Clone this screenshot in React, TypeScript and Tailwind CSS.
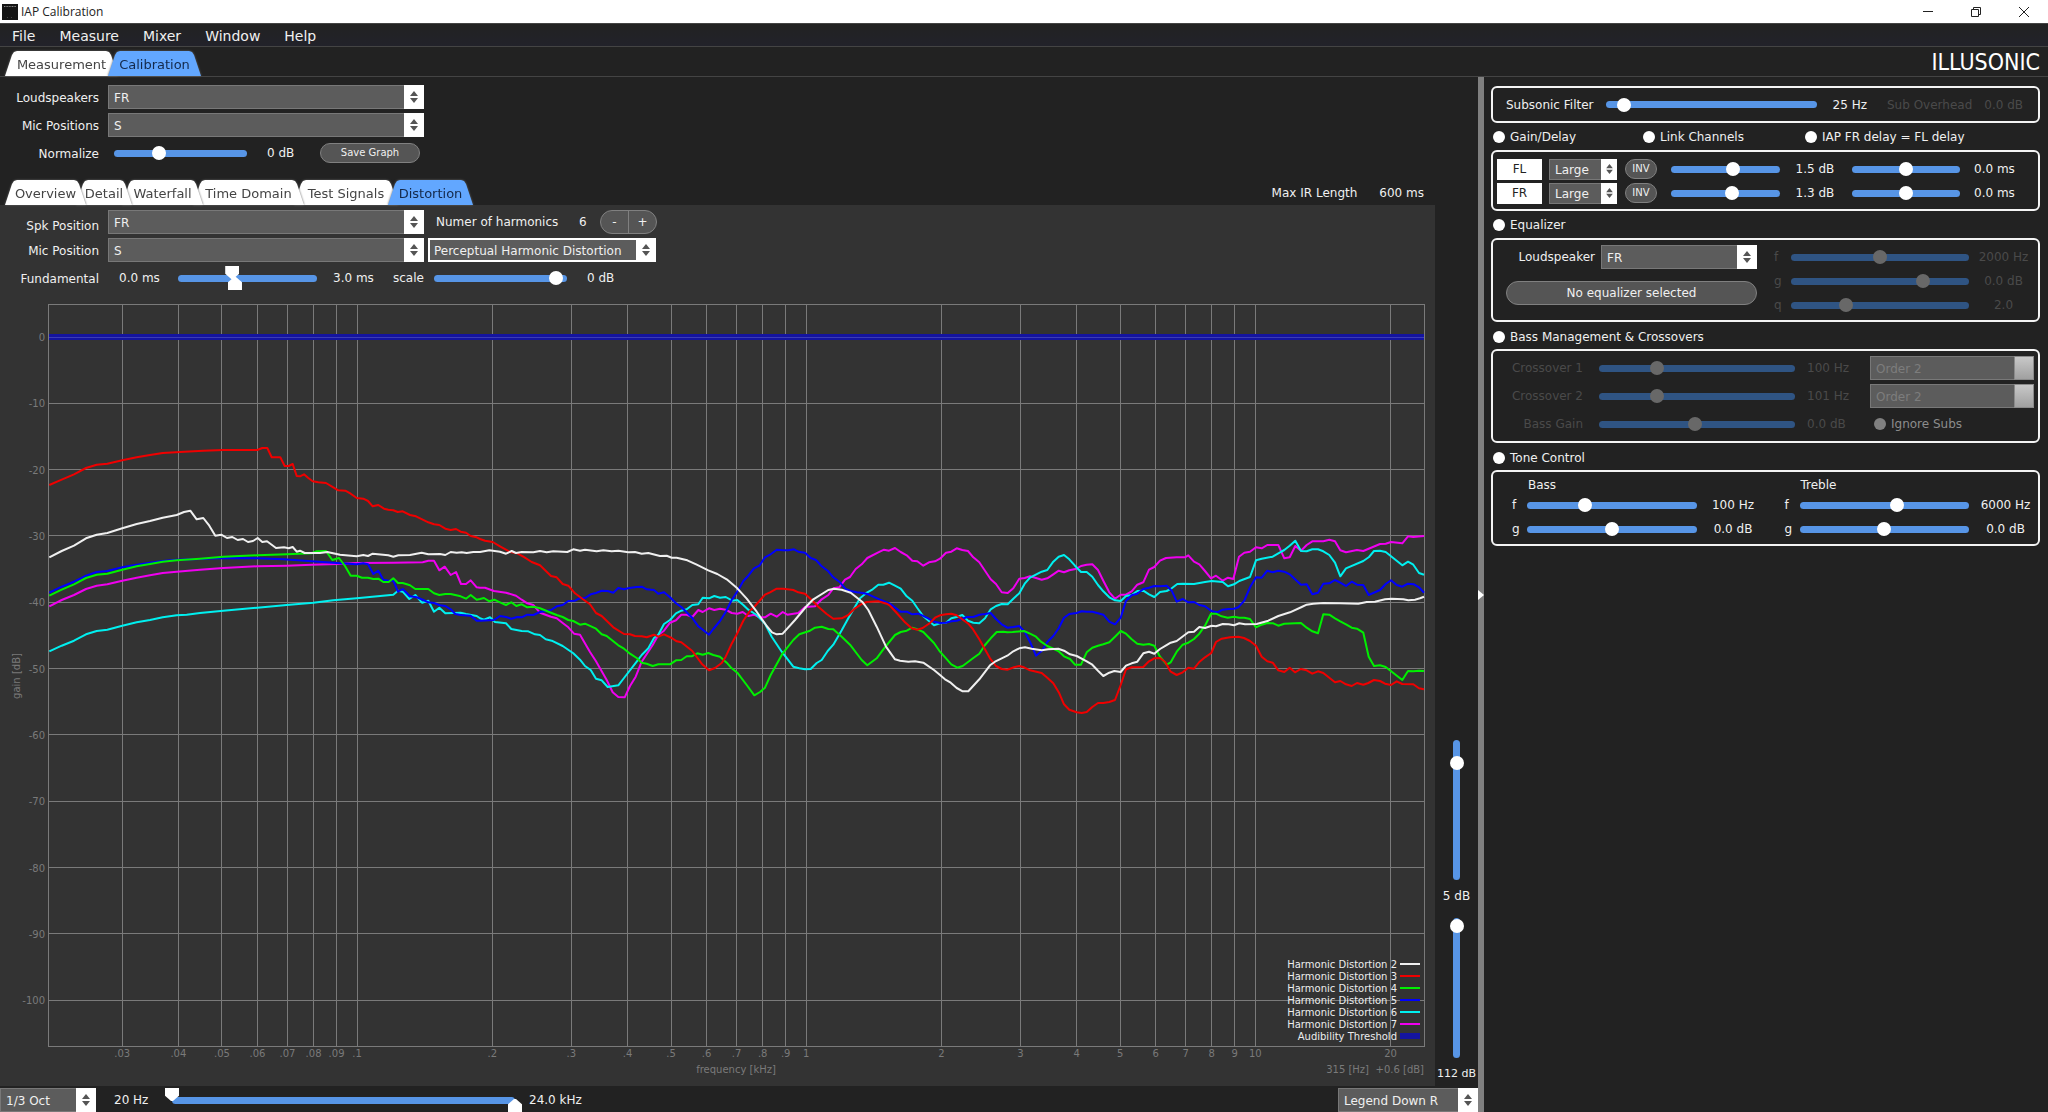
import type { ReactNode } from "react";
import clsx from "clsx";

type Segments = [string, string, string];

// Origin of each third of the graph. Samples are kept at three times the
// drawing resolution, so they are divided by 3 before they are offset.
const ORIGINS = [
  [0, 300],
  [480, 480],
  [940, 480],
];

const TRACES: { name: string; color: string; data: Segments }[] = [
  {
    name: "Harmonic Distortion 7",
    color: "#f000f0",
    data: [
      "148,919 185,900 222,885 258,867 290,857 322,853 367,842 410,833 450,826 488,819 530,815 600,809 670,804 772,799 860,797 935,794 1010,792 1070,789 1180,788 1268,787 1285,782 1302,782 1318,811 1334,800 1352,825 1368,816 1383,852 1398,852 1412,841 1430,862",
      "0,323 15,323 42,333 78,338 108,347 125,359 142,370 160,375 180,398 213,410 230,415 248,429 265,442 282,461 300,464 330,516 348,544 380,600 398,637 415,651 434,652 450,618 467,590 485,545 518,495 535,465 552,452 570,428 588,421 604,404 620,404 637,411 655,390 668,396 687,385 703,390 720,386 737,389 755,399 772,401 788,396 805,408 822,404 838,412 855,412 872,401 890,410 908,396 922,404 955,399 975,381 1005,379 1025,358 1045,345 1060,325 1078,322 1095,299 1110,291 1127,267 1145,253 1162,234 1195,217 1212,209 1227,212 1245,204 1262,216 1280,226 1297,242 1312,244 1330,257 1347,247 1365,244",
      "0,236 18,218 34,215 50,205 67,210 84,213 100,232 118,247 135,272 152,298 168,312 185,337 203,339 220,325 238,296 254,294 270,289 288,294 305,299 322,295 340,283 356,272 372,277 388,271 410,266 423,258 440,254 457,253 474,270 490,302 508,337 525,356 542,344 558,344 575,334 592,314 610,307 627,269 643,261 660,242 678,234 710,232 735,232 745,226 762,245 778,253 795,273 813,295 828,287 848,302 864,293 880,297 897,230 913,218 930,215 948,202 965,205 982,195 1015,195 1033,235 1049,232 1066,198 1083,212 1100,195 1117,184 1150,184 1168,179 1185,184 1201,211 1218,217 1251,210 1270,213 1320,192 1337,191 1353,186 1387,190 1404,169 1420,171 1452,168",
    ],
  },
  {
    name: "Harmonic Distortion 6",
    color: "#00f0f0",
    data: [
      "148,1054 185,1037 222,1022 258,1003 290,993 322,989 367,977 410,967 450,960 488,952 530,946 560,944 600,939 670,932 772,923 860,915 940,908 1000,901 1070,895 1180,884 1194,872 1208,875 1228,897 1246,885 1266,908 1285,902 1302,935 1318,923 1336,940 1382,938 1398,942 1430,948",
      "0,415 12,419 30,412 45,426 78,430 94,447 125,453 145,454 165,463 180,465 197,478 215,482 248,498 280,520 300,539 315,558 332,570 348,596 365,601 383,621 415,616 432,594 470,545 485,525 505,505 522,474 535,464 552,432 570,420 588,400 604,392 620,388 637,375 655,373 668,353 687,355 703,348 720,353 737,351 757,362 772,360 790,375 805,389 830,405 855,431 875,470 905,515 940,560 958,565 975,568 992,567 1010,549 1025,540 1043,513 1060,494 1085,451 1105,415 1140,355 1162,337 1178,328 1195,314 1210,314 1227,308 1245,317 1262,326 1280,349 1297,362 1312,384 1330,409 1362,436",
      "0,430 18,428 34,415 50,411 67,405 84,422 100,428 118,430 135,415 152,388 168,378 185,372 203,373 220,356 238,340 254,311 270,293 305,275 322,270 340,245 356,230 372,225 388,238 405,257 423,276 440,276 457,290 474,315 490,334 508,352 525,361 542,363 558,348 575,345 592,333 610,332 627,343 643,351 660,336 680,333 695,325 712,312 728,311 762,312 795,306 815,303 848,306 864,319 882,313 898,303 930,291 948,241 965,236 998,230 1015,220 1033,210 1049,197 1066,182 1083,213 1100,214 1117,208 1134,208 1150,214 1168,225 1185,248 1201,289 1218,265 1270,243 1286,232 1302,213 1320,212 1337,216 1387,256 1404,245 1420,254 1437,279 1452,284",
    ],
  },
  {
    name: "Harmonic Distortion 5",
    color: "#0000ff",
    data: [
      "148,878 185,860 222,845 258,827 290,816 322,813 367,802 410,794 450,788 488,783 530,779 600,777 670,774 772,775 850,778 935,784 1010,789 1070,793 1090,790 1104,793 1120,822 1135,812 1150,839 1166,842 1180,842 1194,875 1208,867 1230,889 1250,892 1270,900 1285,907 1302,909 1320,916 1336,918 1352,928 1366,942 1382,945 1412,947 1430,962",
      "0,422 42,420 60,408 78,411 94,416 112,411 125,412 142,404 160,405 180,396 213,390 230,379 248,375 265,363 285,362 300,354 315,354 332,343 348,339 365,332 383,333 400,338 415,324 432,328 448,324 470,321 485,320 500,328 522,330 535,341 552,337 570,352 588,370 604,381 620,397 637,414 655,439 687,464 700,447 720,423 737,396 755,360 775,330 790,303 805,287 822,265 838,257 855,232 870,224 890,209 910,211 925,211 942,208 955,215 975,218 992,234 1008,240 1025,259 1043,272 1060,292 1078,305 1098,328 1112,333 1130,337 1148,339 1165,343 1180,350 1198,358 1230,371 1262,395 1280,395 1297,403 1315,401 1345,415 1362,425",
      "0,429 18,428 34,424 50,422 82,411 100,411 118,404 135,402 152,399 168,417 185,433 202,443 220,441 238,438 254,455 272,490 288,527 305,513 322,486 340,468 356,445 372,413 388,402 410,399 425,394 440,395 457,395 474,400 490,404 508,425 525,433 542,413 558,362 575,346 592,341 610,327 627,323 643,318 660,319 680,317 695,332 710,365 728,357 745,367 762,366 778,375 795,379 814,393 832,397 848,389 866,387 882,386 895,382 913,362 930,322 948,292 965,293 982,272 998,277 1015,272 1033,275 1049,283 1083,314 1100,313 1117,343 1134,338 1150,311 1168,310 1185,300 1201,308 1218,318 1235,305 1251,314 1270,315 1286,345 1320,330 1337,312 1353,301 1370,315 1387,320 1404,311 1422,313 1437,322 1452,338",
    ],
  },
  {
    name: "Harmonic Distortion 4",
    color: "#00f000",
    data: [
      "148,887 185,869 222,853 258,834 290,824 322,821 367,809 410,799 450,792 488,785 530,781 600,776 670,770 772,766 860,763 935,760 950,754 978,753 997,780 1017,774 1035,798 1052,827 1070,827 1086,833 1104,833 1120,837 1135,836 1150,846 1166,846 1180,835 1194,849 1208,849 1230,856 1246,867 1285,867 1302,880 1318,885 1336,882 1352,882 1382,889 1398,896 1412,885 1430,899",
      "0,357 12,354 28,364 43,359 60,367 78,375 94,367 109,378 125,373 142,382 160,380 180,385 213,398 230,405 248,411 265,420 280,423 300,434 315,431 348,446 365,463 380,468 415,496 432,506 450,521 470,534 485,548 500,551 518,558 535,553 570,553 588,541 604,540 620,529 635,529 652,520 668,524 685,519 700,525 720,530 740,548 755,565 772,578 800,615 823,646 840,636 855,623 872,585 908,520 940,480 958,463 990,452 1005,443 1025,440 1045,447 1060,448 1085,470 1110,494 1145,540 1162,556 1190,535 1210,508 1245,465 1262,456 1280,452 1297,443 1312,448 1330,456 1362,489",
      "0,515 18,535 34,553 52,563 68,558 100,534 118,521 135,495 152,475 170,456 190,455 202,457 218,456 252,453 270,461 288,470 303,485 322,498 355,513 372,529 390,537 405,554 423,554 440,517 457,503 474,497 490,493 508,487 525,470 542,453 558,461 575,478 592,491 610,494 627,492 643,497 660,530 680,554 692,547 710,515 728,494 745,488 762,477 778,461 795,437 813,401 828,401 845,409 863,413 882,410 898,413 913,413 930,417 948,442 965,434 982,429 1000,430 1015,437 1033,431 1083,429 1100,443 1117,454 1134,460 1150,403 1168,404 1185,415 1201,424 1218,433 1235,443 1251,446 1270,458 1286,530 1302,558 1320,556 1337,561 1387,600 1404,573 1420,574 1437,572 1452,573",
    ],
  },
  {
    name: "Harmonic Distortion 3",
    color: "#f00000",
    data: [
      "148,555 185,539 222,523 258,504 290,494 322,491 367,481 410,472 450,465 488,459 540,456 610,452 670,450 772,450 787,444 802,444 815,472 841,472 854,498 866,498 878,492 890,528 900,529 912,523 925,534 938,544 955,547 978,549 1000,562 1015,571 1036,572 1052,581 1070,594 1090,596 1104,603 1118,619 1135,615 1152,626 1165,629 1180,631 1193,636 1208,634 1230,645 1248,649 1285,667 1302,673 1318,675 1336,686 1352,690 1368,687 1382,695 1398,698 1412,708 1430,712",
      "0,177 15,182 38,186 60,199 90,216 112,220 130,230 155,246 180,256 213,288 230,292 248,312 265,317 285,340 315,362 330,373 348,399 365,408 400,442 432,462 450,463 465,468 485,469 500,472 522,464 535,470 552,463 575,474 590,484 604,487 637,513 665,551 687,571 705,564 725,549 737,530 755,491 772,460 790,422 810,392 825,378 855,344 870,337 890,326 910,326 940,330 955,337 975,341 995,360 1015,380 1040,402 1060,416 1085,415 1105,405 1125,385 1145,372 1160,366 1195,364 1220,371 1230,377 1250,399 1275,427 1295,445 1312,449 1328,444 1350,429 1365,413",
      "0,406 18,403 34,401 50,406 85,431 100,449 118,478 150,535 168,558 185,567 202,569 222,562 238,558 252,562 270,571 305,579 320,592 340,610 358,640 372,673 388,689 410,697 425,699 440,696 457,681 474,669 490,669 508,666 525,660 542,615 558,568 575,562 610,561 627,544 643,535 660,534 675,545 692,575 710,585 728,577 745,563 762,566 778,546 795,532 814,519 828,486 845,476 870,472 895,470 912,474 930,483 948,497 965,530 982,544 998,548 1015,571 1033,576 1049,563 1065,577 1082,567 1100,571 1117,581 1134,574 1150,579 1185,607 1201,603 1218,613 1235,618 1251,609 1270,614 1285,609 1302,600 1320,603 1335,611 1353,615 1370,604 1387,612 1420,613 1437,625 1452,628",
    ],
  },
  {
    name: "Harmonic Distortion 2",
    color: "#f0f0f0",
    data: [
      "148,772 185,753 222,737 258,715 290,704 322,699 367,685 410,672 450,663 488,653 530,645 552,636 571,632 590,658 610,654 628,677 646,707 664,704 681,714 697,711 713,720 729,717 744,726 759,723 773,714 787,726 801,724 828,744 852,742 866,745 878,741 890,755 900,752 914,759 960,759 982,756 1020,764 1070,769 1090,765 1104,768 1118,761 1165,766 1180,770 1195,766 1230,765 1265,758 1285,763 1320,762 1336,765 1352,756 1370,758 1385,757 1400,759 1420,756",
      "0,216 28,211 60,215 78,221 95,213 108,219 125,216 160,217 180,213 200,217 220,214 262,216 280,208 300,212 315,209 350,214 370,211 395,214 415,212 445,217 465,216 485,221 505,219 540,228 560,227 575,233 590,233 622,241 650,254 685,271 712,282 740,298 772,325 800,356 830,395 860,438 876,457 890,463 908,461 945,420 980,378 1000,358 1045,330 1062,326 1085,329 1112,338 1148,367 1165,390 1190,440 1218,500 1245,538 1260,542 1285,545 1305,544 1330,548 1362,570",
      "0,585 15,598 32,608 50,624 68,634 85,634 118,598 150,556 165,545 185,535 202,527 220,514 238,505 255,502 275,506 305,511 325,508 355,506 372,512 390,523 410,528 440,544 457,554 474,572 490,588 508,578 523,573 542,576 558,557 575,550 592,545 610,520 627,515 643,521 660,507 677,497 692,488 710,483 745,457 762,455 778,441 795,444 815,437 828,439 848,432 866,433 882,436 898,430 915,433 950,432 985,422 1015,408 1050,397 1085,381 1100,374 1120,371 1150,369 1200,370 1255,371 1280,366 1305,365 1335,358 1355,356 1390,358 1405,361 1425,359 1440,355 1452,350",
    ],
  },
];

const PLOT = { left: 48, right: 1424, top: 304, bottom: 1046 };

const freqX = (hz: number) => 357.1 + 449.1 * Math.log10(hz / 100);
const gainY = (db: number) => 337 - db * 6.633;

function toPoints(data: Segments) {
  return data
    .map((segment, i) =>
      segment
        .split(" ")
        .map((pair) => {
          const [x, y] = pair.split(",").map(Number);
          return `${(ORIGINS[i][0] + x / 3).toFixed(1)},${(ORIGINS[i][1] + y / 3).toFixed(1)}`;
        })
        .join(" "),
    )
    .join(" ");
}

const FREQS = [
  30, 40, 50, 60, 70, 80, 90, 100, 200, 300, 400, 500, 600, 700, 800, 900, 1000, 2000, 3000, 4000,
  5000, 6000, 7000, 8000, 9000, 10000, 20000,
];
const GAINS = [0, -10, -20, -30, -40, -50, -60, -70, -80, -90, -100];

const freqLabel = (hz: number) => String(hz / 1000).replace(/^0/, "");

function Chart() {
  const legend = [...TRACES].reverse();
  return (
    <svg
      viewBox="0 290 1435 796"
      className="block h-auto w-full font-['DejaVu_Sans',sans-serif] text-[10px]"
      role="img"
      aria-label="Perceptual harmonic distortion"
    >
      <g stroke="#7a7a7a" strokeWidth="1" shapeRendering="crispEdges" fill="none">
        <rect
          x={PLOT.left}
          y={PLOT.top}
          width={PLOT.right - PLOT.left}
          height={PLOT.bottom - PLOT.top}
        />
        {FREQS.map((f) => (
          <line key={f} x1={freqX(f)} x2={freqX(f)} y1={PLOT.top} y2={PLOT.bottom} />
        ))}
        {GAINS.map((g) => (
          <line key={g} x1={PLOT.left} x2={PLOT.right} y1={gainY(g)} y2={gainY(g)} />
        ))}
      </g>
      <g fill="#7a7a7a">
        {GAINS.map((g) => (
          <text key={g} x="45" y={gainY(g) + 4} textAnchor="end">
            {g}
          </text>
        ))}
        {FREQS.map((f) => (
          <text key={f} x={freqX(f)} y="1057" textAnchor="middle">
            {freqLabel(f)}
          </text>
        ))}
        <text x="736" y="1073" textAnchor="middle">
          frequency [kHz]
        </text>
        <text x="1369" y="1073" textAnchor="end">
          315 [Hz]
        </text>
        <text x="1424" y="1073" textAnchor="end">
          +0.6 [dB]
        </text>
        <text transform="translate(20 676) rotate(-90)" textAnchor="middle">
          gain [dB]
        </text>
      </g>
      <rect x="49" y="334" width="1375" height="6" fill="#1414a0" />
      <line x1="49" x2="1424" y1="337.5" y2="337.5" stroke="#3c3cb4" />
      {TRACES.map((t) => (
        <polyline
          key={t.name}
          points={toPoints(t.data)}
          fill="none"
          stroke={t.color}
          strokeWidth="2"
          strokeLinejoin="round"
        />
      ))}
      {legend.map((t, i) => (
        <g key={t.name}>
          <text x="1397" y={968 + i * 12} textAnchor="end" fill="#ededed">
            {t.name}
          </text>
          <rect x="1400" y={963 + i * 12} width="20" height="2" fill={t.color} />
        </g>
      ))}
      <text x="1397" y="1040" textAnchor="end" fill="#ededed">
        Audibility Threshold
      </text>
      <rect x="1400" y="1033" width="20" height="6" fill="#1414a0" />
    </svg>
  );
}

function Slider({
  label,
  value,
  disabled,
  vertical,
  className,
}: {
  label: string;
  value: number;
  disabled?: boolean;
  vertical?: boolean;
  className?: string;
}) {
  return (
    <input
      type="range"
      aria-label={label}
      defaultValue={value}
      disabled={disabled}
      className={clsx(
        "m-0 block cursor-pointer appearance-none rounded-full [&::-webkit-slider-thumb]:size-3.5 [&::-webkit-slider-thumb]:appearance-none [&::-webkit-slider-thumb]:rounded-full",
        vertical ? "w-[7px] [direction:rtl] [writing-mode:vertical-lr]" : "h-[7px] min-w-0",
        disabled
          ? "bg-[#2f5483] [&::-webkit-slider-thumb]:bg-[#686868]"
          : "bg-[#5795e6] [&::-webkit-slider-thumb]:bg-white",
        className,
      )}
    />
  );
}

const markerBase =
  "pointer-events-none col-start-1 row-start-1 m-0 h-6 w-full appearance-none bg-transparent [&::-webkit-slider-thumb]:pointer-events-auto [&::-webkit-slider-thumb]:h-6 [&::-webkit-slider-thumb]:w-3.5 [&::-webkit-slider-thumb]:appearance-none [&::-webkit-slider-thumb]:bg-white";

function RangeSlider({
  label,
  low,
  high,
  className,
}: {
  label: string;
  low: number;
  high: number;
  className?: string;
}) {
  return (
    <div className={clsx("grid items-center", className)}>
      <span className="col-start-1 row-start-1 mx-[7px] h-[7px] rounded-full bg-[#5795e6]" />
      <input
        type="range"
        aria-label={`${label} start`}
        defaultValue={low}
        className={clsx(
          markerBase,
          "[&::-webkit-slider-thumb]:[clip-path:polygon(0_0,100%_0,100%_32%,57%_54%,43%_54%,0_32%)]",
        )}
      />
      <input
        type="range"
        aria-label={`${label} end`}
        defaultValue={high}
        className={clsx(
          markerBase,
          "[&::-webkit-slider-thumb]:[clip-path:polygon(0_100%,100%_100%,100%_68%,57%_46%,43%_46%,0_68%)]",
        )}
      />
    </div>
  );
}

function Select({
  label,
  value,
  small,
  focused,
  disabled,
  className,
}: {
  label: string;
  value: string;
  small?: boolean;
  focused?: boolean;
  disabled?: boolean;
  className?: string;
}) {
  return (
    <div className={clsx("relative", small ? "h-[21px]" : "h-6", className)}>
      <select
        aria-label={label}
        disabled={disabled}
        className={clsx(
          "block h-full w-full appearance-none rounded-none bg-[#5c5c5c] pt-px pr-5 opacity-100 outline-none",
          focused ? "border-2 border-white pl-1" : "border border-[#787878] pl-[5px]",
          disabled ? "text-[#7d7d7d]" : "text-[#f0f0f0]",
        )}
      >
        <option>{value}</option>
      </select>
      <span
        className={clsx(
          "pointer-events-none absolute inset-y-0 right-0 flex items-center justify-center",
          small ? "w-4" : "w-5",
          disabled
            ? "border border-[#8a8a8a] bg-linear-to-b from-[#c8c8c8] to-[#a0a0a0]"
            : "bg-white",
        )}
      >
        {!disabled && (
          <svg viewBox="0 0 8 12" className={small ? "h-[10px] w-[7px]" : "h-3 w-2"} fill="#555">
            <path d="M4 0 8 5H0ZM4 12 0 7H8Z" />
          </svg>
        )}
      </span>
    </div>
  );
}

function TabStrip({
  tabs,
  active,
}: {
  tabs: { label: string; width: string }[];
  active: string;
}) {
  return (
    <div role="tablist" className="isolate flex pl-[5px] text-[13px]">
      {tabs.map((tab, i) => (
        <span
          key={tab.label}
          className="relative flex [filter:drop-shadow(0_0_1px_#666)] not-first:-ml-2.5"
          style={{ zIndex: tab.label === active ? 20 : 10 - i }}
        >
          <button
            type="button"
            role="tab"
            aria-selected={tab.label === active}
            className={clsx(
              "h-[25px] whitespace-nowrap pt-0.5 [clip-path:polygon(7px_4px,9px_1px,12px_0,calc(100%_-_12px)_0,calc(100%_-_9px)_1px,calc(100%_-_7px)_4px,100%_100%,0_100%)]",
              tab.label === active ? "bg-[#62a7ff] text-[#14294a]" : "bg-white text-[#444]",
              tab.width,
            )}
          >
            {tab.label}
          </button>
        </span>
      ))}
    </div>
  );
}

function Toggle({
  label,
  disabled,
  className,
}: {
  label: string;
  disabled?: boolean;
  className?: string;
}) {
  return (
    <label
      className={clsx(
        "flex items-center gap-[5px] whitespace-nowrap",
        disabled && "text-[#8c8c8c]",
        className,
      )}
    >
      <input
        type="checkbox"
        disabled={disabled}
        className={clsx(
          "size-3 appearance-none rounded-full",
          disabled ? "bg-[#808080]" : "bg-white",
        )}
      />
      {label}
    </label>
  );
}

function Box({ children, className }: { children: ReactNode; className?: string }) {
  return (
    <section className={clsx("rounded-md border-2 border-[#f4f4f4]", className)}>{children}</section>
  );
}

const pill = "rounded-full border border-[#808080] bg-[#555]";

function ChannelRow({ name, gain, gainPos }: { name: string; gain: string; gainPos: number }) {
  return (
    <div className="flex h-[22px] items-center">
      <button type="button" className="h-[21px] w-[45px] bg-white text-[#222]">
        {name}
      </button>
      <Select small label={`${name} size`} value="Large" className="ml-[7px] w-[68px]" />
      <button type="button" className={clsx(pill, "ml-2 h-5 w-8 text-[10px]")}>
        INV
      </button>
      <Slider label={`${name} gain`} value={gainPos} className="ml-3.5 flex-1" />
      <output className="ml-4 w-14">{gain}</output>
      <Slider label={`${name} delay`} value={50} className="flex-1" />
      <output className="ml-3.5 w-16">0.0 ms</output>
    </div>
  );
}

function ToneRow({ name, label, value, pos }: { name: string; label: string; value: string; pos: number }) {
  return (
    <div className="flex h-6 items-center">
      <span className="w-[15px]">{label}</span>
      <Slider label={`${name} ${label}`} value={pos} className="flex-1" />
      <output className="w-[69px] pl-1 text-center">{value}</output>
    </div>
  );
}

function CrossoverRow({
  label,
  value,
  pos,
  children,
}: {
  label: string;
  value: string;
  pos: number;
  children: ReactNode;
}) {
  return (
    <div className="flex h-6 items-center text-[#4a4a4a]">
      <span className="w-[90px] text-right">{label}</span>
      <Slider disabled label={label} value={pos} className="ml-4 flex-1" />
      <output className="w-[75px] pl-3">{value}</output>
      <div className="w-[164px]">{children}</div>
    </div>
  );
}

function SidePanel() {
  return (
    <aside className="w-[564px] shrink-0 pt-[9px] pr-2 pl-[7px]">
      <Box className="flex h-[37px] items-center px-[13px]">
        <span>Subsonic Filter</span>
        <Slider label="Subsonic Filter" value={6} className="ml-3 flex-1" />
        <output className="ml-4">25 Hz</output>
        <span className="ml-5 text-[#4a4a4a]">Sub Overhead</span>
        <output className="mr-0.5 ml-3 text-[#4a4a4a]">0.0 dB</output>
      </Box>

      <div className="flex h-[27px] items-center pl-0.5">
        <Toggle label="Gain/Delay" className="w-[150px]" />
        <Toggle label="Link Channels" className="w-[162px]" />
        <Toggle label="IAP FR delay = FL delay" />
      </div>
      <Box className="flex flex-col gap-0.5 pt-1.5 pb-[5px] pl-1">
        <ChannelRow name="FL" gain="1.5 dB" gainPos={58} />
        <ChannelRow name="FR" gain="1.3 dB" gainPos={57} />
      </Box>

      <div className="flex h-[27px] items-center pl-0.5">
        <Toggle label="Equalizer" />
      </div>
      <Box className="flex pt-[5px] pb-[3px]">
        <div className="w-[264px] pl-[13px]">
          <div className="flex items-center justify-end gap-1.5">
            <span>Loudspeaker</span>
            <Select label="Loudspeaker" value="FR" className="w-[156px]" />
          </div>
          <button type="button" className={clsx(pill, "mt-3 h-6 w-full")}>
            No equalizer selected
          </button>
        </div>
        <div className="flex-1 pl-[17px] text-[#4a4a4a]">
          {[
            { label: "f", value: "2000 Hz", pos: 50 },
            { label: "g", value: "0.0 dB", pos: 76 },
            { label: "q", value: "2.0", pos: 29 },
          ].map((row) => (
            <div key={row.label} className="flex h-6 items-center">
              <span className="w-[17px]">{row.label}</span>
              <Slider disabled label={row.label} value={row.pos} className="flex-1" />
              <output className="w-[69px] text-center">{row.value}</output>
            </div>
          ))}
        </div>
      </Box>

      <div className="flex h-[27px] items-center pt-0.5 pl-0.5">
        <Toggle label="Bass Management & Crossovers" />
      </div>
      <Box className="flex flex-col gap-1 pt-[5px] pr-1 pb-[5px]">
        <CrossoverRow label="Crossover 1" value="100 Hz" pos={28}>
          <Select disabled label="Crossover 1 order" value="Order 2" />
        </CrossoverRow>
        <CrossoverRow label="Crossover 2" value="101 Hz" pos={28}>
          <Select disabled label="Crossover 2 order" value="Order 2" />
        </CrossoverRow>
        <CrossoverRow label="Bass Gain" value="0.0 dB" pos={49}>
          <Toggle disabled label="Ignore Subs" className="pl-1" />
        </CrossoverRow>
      </Box>

      <div className="flex h-[27px] items-center pt-0.5 pl-0.5">
        <Toggle label="Tone Control" />
      </div>
      <Box className="grid grid-cols-2 gap-x-[19px] pt-[5px] pb-[3px] pl-[19px]">
        <div>
          <h3 className="h-4 pl-4 leading-4">Bass</h3>
          <ToneRow name="Bass" label="f" value="100 Hz" pos={33} />
          <ToneRow name="Bass" label="g" value="0.0 dB" pos={50} />
        </div>
        <div>
          <h3 className="h-4 pl-4 leading-4">Treble</h3>
          <ToneRow name="Treble" label="f" value="6000 Hz" pos={58} />
          <ToneRow name="Treble" label="g" value="0.0 dB" pos={50} />
        </div>
      </Box>
    </aside>
  );
}

const fieldLabel = "w-[99px] shrink-0 pt-px text-right";

export default function App() {
  return (
    <div className="flex min-h-screen flex-col bg-[#222] font-['DejaVu_Sans',sans-serif] text-xs text-[#f0f0f0]">
      <header className="flex h-[23px] items-center bg-white text-[#222]">
        <svg viewBox="0 0 16 16" className="ml-0.5 size-4">
          <rect width="16" height="16" fill="#151515" />
          <path d="M2 2.5h12" stroke="#888" strokeDasharray="1 .6" />
          <path d="M5 13.5h1M9 13.5h1" stroke="#444" />
        </svg>
        <h1 className="ml-[3px] font-['Open_Sans',sans-serif]">IAP Calibration</h1>
        <div className="ml-auto flex">
          <button type="button" aria-label="Minimize" className="flex w-12 justify-center">
            <svg viewBox="0 0 12 12" className="size-3" stroke="#222" fill="none">
              <path d="M1 5.5h10" />
            </svg>
          </button>
          <button type="button" aria-label="Restore" className="flex w-12 justify-center">
            <svg viewBox="0 0 12 12" className="size-3" stroke="#222" fill="none">
              <path d="M1.500 3.500h7v7h-7zM3.500 3.500v-2h7v7h-2" />
            </svg>
          </button>
          <button type="button" aria-label="Close" className="flex w-12 justify-center">
            <svg viewBox="0 0 12 12" className="size-3" stroke="#222" fill="none">
              <path d="M1 1l10 10M11 1 1 11" />
            </svg>
          </button>
        </div>
      </header>

      <nav className="flex h-6 items-center gap-6 border-y border-[#444] bg-linear-to-b from-[#222] to-[#22222a] pt-0.5 pl-3 text-sm">
        {["File", "Measure", "Mixer", "Window", "Help"].map((item) => (
          <button key={item} type="button">
            {item}
          </button>
        ))}
      </nav>

      <div className="flex h-[30px] items-end justify-between border-b border-[#444]">
        <TabStrip
          active="Calibration"
          tabs={[
            { label: "Measurement", width: "w-[113px]" },
            { label: "Calibration", width: "w-[93px]" },
          ]}
        />
        <div className="mr-2 font-['DejaVu_Sans_Condensed','DejaVu_Sans',sans-serif] text-[23px] leading-7 text-white">
          ILLUSONIC
        </div>
      </div>

      <div className="flex flex-1">
        <main className="flex min-w-0 flex-1 flex-col">
          <div className="flex flex-col gap-1 pt-2">
            <div className="flex items-center gap-[9px]">
              <span className={fieldLabel}>Loudspeakers</span>
              <Select label="Loudspeakers" value="FR" className="w-[316px]" />
            </div>
            <div className="flex items-center gap-[9px]">
              <span className={fieldLabel}>Mic Positions</span>
              <Select label="Mic Positions" value="S" className="w-[316px]" />
            </div>
            <div className="flex h-6 items-center">
              <span className={fieldLabel}>Normalize</span>
              <Slider label="Normalize" value={32} className="ml-[15px] w-[133px]" />
              <output className="ml-5 w-[53px]">0 dB</output>
              <button type="button" className={clsx(pill, "h-5 w-[100px] text-[10px]")}>
                Save Graph
              </button>
            </div>
          </div>

          <div className="mt-[15px] flex items-end justify-between">
            <TabStrip
              active="Distortion"
              tabs={[
                { label: "Overview", width: "w-[81px]" },
                { label: "Detail", width: "w-[56px]" },
                { label: "Waterfall", width: "w-[81px]" },
                { label: "Time Domain", width: "w-[111px]" },
                { label: "Test Signals", width: "w-[104px]" },
                { label: "Distortion", width: "w-[85px]" },
              ]}
            />
            <div className="flex h-[25px] items-center gap-[22px] pr-[54px]">
              <span>Max IR Length</span>
              <output>600 ms</output>
            </div>
          </div>

          <div className="flex flex-1">
            <div className="min-w-0 flex-1 bg-[#333]">
              <div className="flex flex-col gap-1 pt-[5px]">
                <div className="flex h-6 items-center">
                  <span className={clsx(fieldLabel, "self-end")}>Spk Position</span>
                  <Select label="Spk Position" value="FR" className="ml-[9px] w-[316px]" />
                  <span className="ml-3 w-[143px]">Numer of harmonics</span>
                  <output className="w-[21px]">6</output>
                  <div className={clsx(pill, "flex h-6 w-[57px] divide-x divide-[#808080]")}>
                    <button type="button" aria-label="Fewer harmonics" className="flex-1">
                      -
                    </button>
                    <button type="button" aria-label="More harmonics" className="flex-1">
                      +
                    </button>
                  </div>
                </div>
                <div className="flex h-6 items-center">
                  <span className={fieldLabel}>Mic Position</span>
                  <Select label="Mic Position" value="S" className="ml-[9px] w-[316px]" />
                  <Select
                    focused
                    label="Distortion type"
                    value="Perceptual Harmonic Distortion"
                    className="ml-1 w-[228px]"
                  />
                </div>
                <div className="flex h-6 items-center">
                  <span className={fieldLabel}>Fundamental</span>
                  <output className="ml-5 w-[52px]">0.0 ms</output>
                  <RangeSlider label="Fundamental" low={39} high={41} className="w-[153px]" />
                  <output className="ml-[9px] w-[60px]">3.0 ms</output>
                  <span className="w-[41px]">scale</span>
                  <Slider label="scale" value={97} className="w-[133px]" />
                  <output className="ml-5">0 dB</output>
                </div>
              </div>
              <Chart />
            </div>
            <div className="flex w-[43px] flex-col items-center justify-end pb-1 text-center leading-4 whitespace-nowrap">
              <Slider vertical label="Upper limit" value={87} className="h-[140px]" />
              <output className="mt-2">5 dB</output>
              <Slider vertical label="Range" value={99} className="mt-3.5 h-[140px]" />
              <output className="mt-2 text-[11px]">112 dB</output>
            </div>
          </div>

          <footer className="flex items-center pt-0.5">
            <Select label="Smoothing" value="1/3 Oct" className="w-24" />
            <output className="ml-[18px] w-[51px]">20 Hz</output>
            <RangeSlider label="Frequency" low={0} high={100} className="w-[357px]" />
            <output className="ml-[7px]">24.0 kHz</output>
            <Select label="Legend position" value="Legend Down R" className="ml-auto w-[140px]" />
          </footer>
        </main>

        <div className="flex w-1.5 shrink-0 items-center bg-[#808080]">
          <svg viewBox="0 0 6 10" className="h-2.5 w-1.5" fill="#fff">
            <path d="M0 0 6 5 0 10Z" />
          </svg>
        </div>

        <SidePanel />
      </div>
    </div>
  );
}
